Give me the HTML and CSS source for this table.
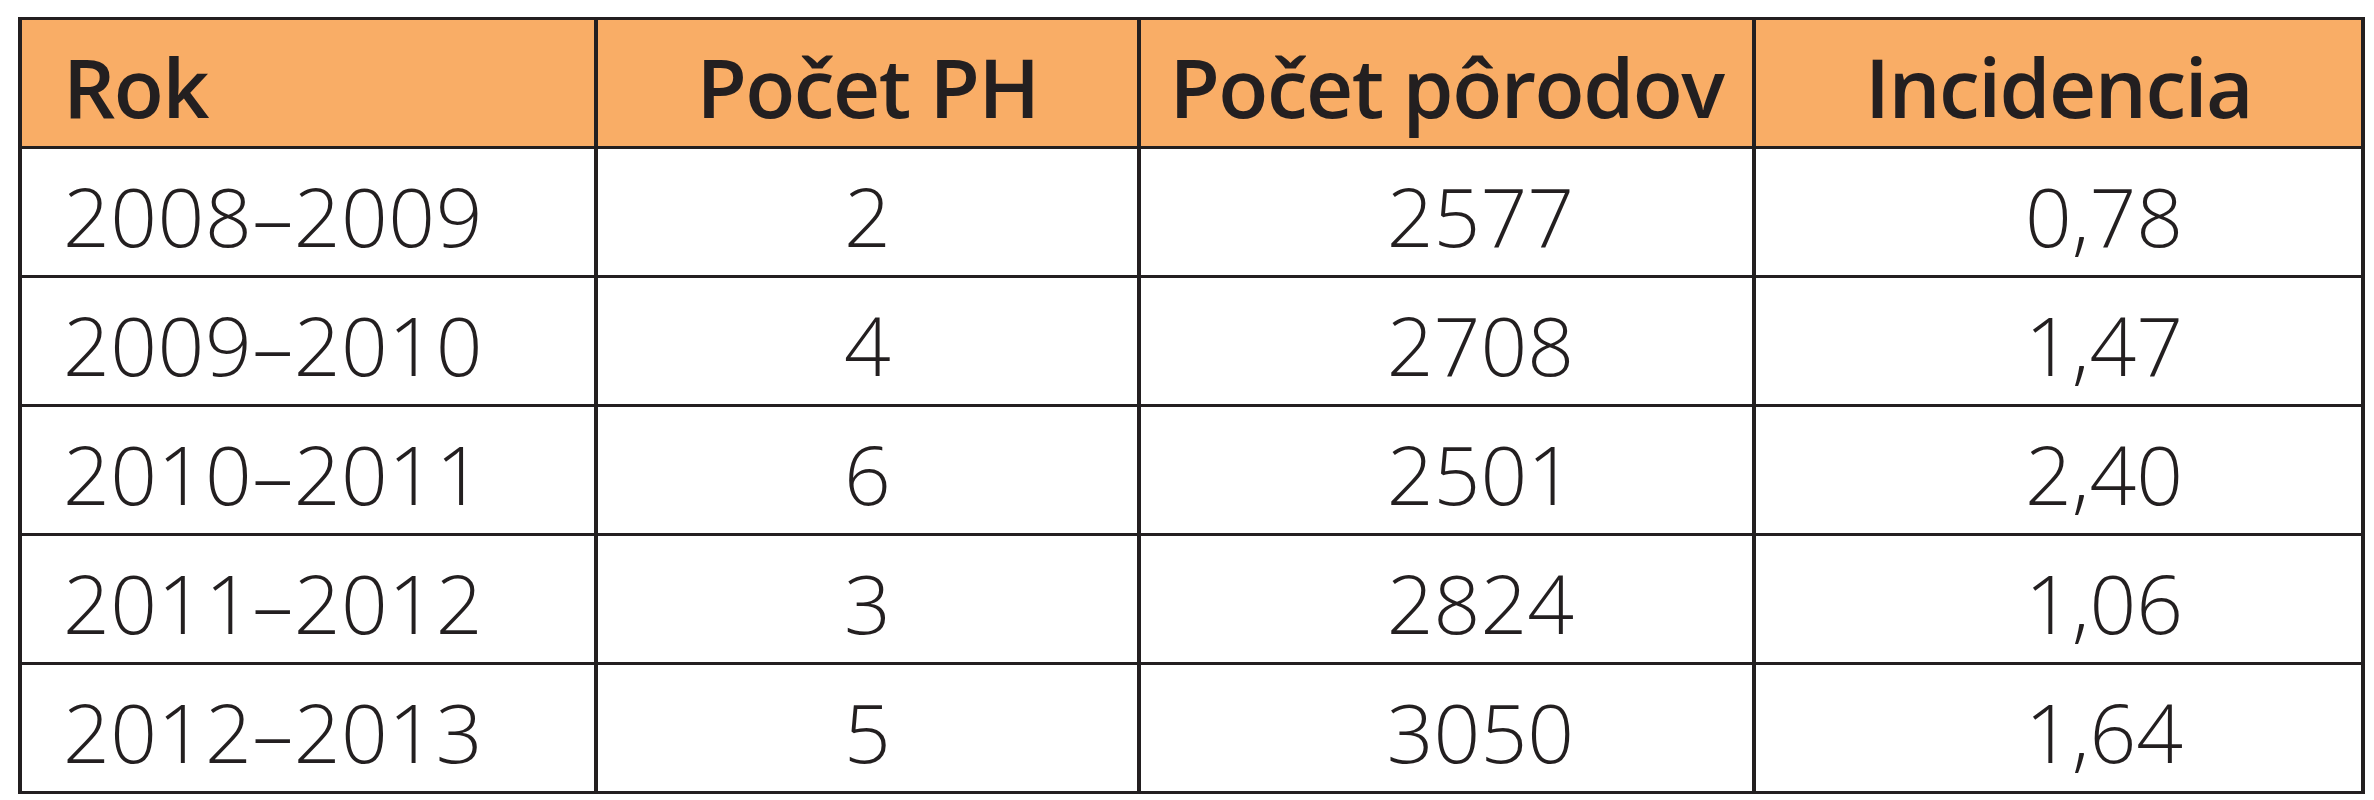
FILE: index.html
```html
<!DOCTYPE html>
<html lang="sk">
<head>
<meta charset="utf-8">
<title>Incidencia</title>
<link rel="stylesheet" href="styles.css">
</head>
<body>
<table class="data">
  <colgroup>
    <col class="c1"><col class="c2"><col class="c3"><col class="c4">
  </colgroup>
  <thead>
    <tr>
      <th class="left">Rok</th>
      <th>Počet PH</th>
      <th>Počet pôrodov</th>
      <th>Incidencia</th>
    </tr>
  </thead>
  <tbody>
    <tr><td class="left">2008–2009</td><td class="mid">2</td><td class="num">2577</td><td class="num">0,78</td></tr>
    <tr><td class="left">2009–2010</td><td class="mid">4</td><td class="num">2708</td><td class="num">1,47</td></tr>
    <tr><td class="left">2010–2011</td><td class="mid">6</td><td class="num">2501</td><td class="num">2,40</td></tr>
    <tr><td class="left">2011–2012</td><td class="mid">3</td><td class="num">2824</td><td class="num">1,06</td></tr>
    <tr><td class="left">2012–2013</td><td class="mid">5</td><td class="num">3050</td><td class="num">1,64</td></tr>
  </tbody>
</table>
</body>
</html>
```
FILE: styles.css
```css
html, body {
  margin: 0;
  padding: 0;
  background: #ffffff;
}

body {
  padding: 17px 0 0 18px;
  font-family: "Open Sans", "Liberation Sans", sans-serif;
  color: #231f20;
}

.data {
  border-collapse: collapse;
  table-layout: fixed;
  width: 2343px;
}

.c1 { width: 576px; }
.c2 { width: 543px; }
.c3 { width: 615px; }
.c4 { width: 609px; }

.data th,
.data td {
  border-style: solid;
  border-color: #231f20;
  border-width: 3px 4px;
  vertical-align: middle;
  white-space: nowrap;
  padding: 5px 0 0 0;
  line-height: 1;
}

.data tr {
  height: 129px;
}

.data th {
  background: #f9ad66;
  font-size: 82px;
  font-weight: 600;
  letter-spacing: -1.5px;
  text-align: center;
}

.data td {
  font-size: 82px;
  font-weight: 300;
  text-align: center;
}

.data td.left {
  letter-spacing: 0.5px;
}

.data th.left,
.data td.left {
  text-align: left;
  padding-left: 41px;
}

.data td.num {
  text-align: right;
  padding-right: 178px;
}
```
